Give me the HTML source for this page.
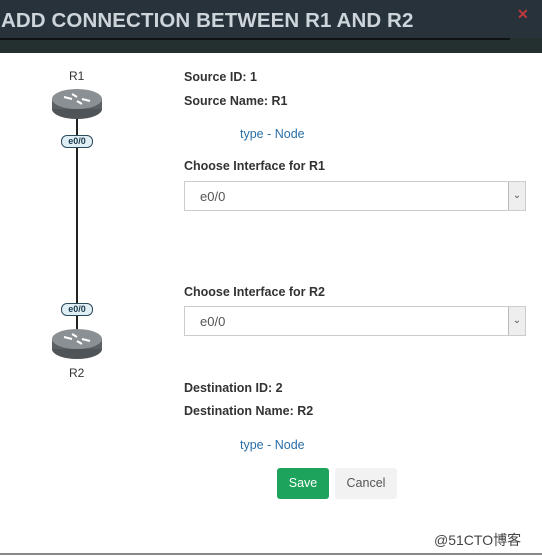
<!DOCTYPE html>
<html><head><style>
body{margin:0;width:542px;height:556px;background:#fff;font-family:"Liberation Sans","Noto Sans CJK SC",sans-serif;position:relative;overflow:hidden}
.hdr{position:absolute;left:0;top:0;width:542px;height:38px;background:#27323a}
.hdr2{position:absolute;left:0;top:38px;width:542px;height:15px;background:#243030}
.hline{position:absolute;left:0;top:38px;width:510px;height:2px;background:#0e1214}
.title{position:absolute;left:1px;top:9px;color:#cdd5da;font-weight:bold;font-size:20.5px;letter-spacing:0.1px}
.x{position:absolute;left:517px;top:6px;color:#c0383c;font-weight:bold;font-size:14px}
.t{position:absolute;font-size:12.5px;color:#333;font-weight:bold}
.lk{position:absolute;font-size:12.5px;color:#2a6fa8}
.sel{position:absolute;left:184px;width:342px;height:30px;border:1px solid #ccc;box-sizing:border-box;font-size:13px;color:#555}
.sel span{position:absolute;left:15px;top:7px}
.arr{position:absolute;right:0;top:0;width:16px;height:28px;background:#eee;border-left:1px solid #bbb;font-size:10px;text-align:center;line-height:28px;color:#555}
.lbl{position:absolute;font-size:12px;color:#333}
.pill{position:absolute;width:30px;height:11px;border:1.5px solid #2a4a5a;border-radius:6px;background:#dfeff5;font-size:9px;font-weight:bold;color:#1a3a4a;text-align:center;line-height:11px}
</style></head><body>
<div class="hdr"></div><div class="hdr2"></div><div class="hline"></div>
<div class="title">ADD CONNECTION BETWEEN R1 AND R2</div>
<div class="x">✕</div>

<div style="position:absolute;left:76px;top:118px;width:2px;height:212px;background:#222"></div>
<div class="lbl" style="left:69px;top:69px">R1</div>
<div class="lbl" style="left:69px;top:366px">R2</div>
<svg style="position:absolute;left:50px;top:86px" width="56" height="36"><ellipse cx="27" cy="23" rx="25" ry="10" fill="#4e5458"/><rect x="2" y="13" width="50" height="10" fill="#5a6064"/><ellipse cx="27" cy="13" rx="25" ry="10" fill="#8a9094"/><path d="M14 11l8 2M40 15l-8-2M22 8l5 3M32 18l-5-3" stroke="#fff" stroke-width="2"/></svg>
<svg style="position:absolute;left:50px;top:326px" width="56" height="36"><ellipse cx="27" cy="23" rx="25" ry="10" fill="#4e5458"/><rect x="2" y="13" width="50" height="10" fill="#5a6064"/><ellipse cx="27" cy="13" rx="25" ry="10" fill="#8a9094"/><path d="M14 11l8 2M40 15l-8-2M22 8l5 3M32 18l-5-3" stroke="#fff" stroke-width="2"/></svg>
<div class="pill" style="left:61px;top:135px">e0/0</div>
<div class="pill" style="left:61px;top:303px">e0/0</div>

<div class="t" style="left:184px;top:70px">Source ID: 1</div>
<div class="t" style="left:184px;top:94px">Source Name: R1</div>
<div class="lk" style="left:240px;top:127px">type - Node</div>
<div class="t" style="left:184px;top:159px">Choose Interface for R1</div>
<div class="sel" style="top:181px"><span>e0/0</span><div class="arr">⌄</div></div>
<div class="t" style="left:184px;top:285px">Choose Interface for R2</div>
<div class="sel" style="top:306px"><span>e0/0</span><div class="arr">⌄</div></div>
<div class="t" style="left:184px;top:381px">Destination ID: 2</div>
<div class="t" style="left:184px;top:404px">Destination Name: R2</div>
<div class="lk" style="left:240px;top:438px">type - Node</div>
<div style="position:absolute;left:277px;top:468px;width:52px;height:31px;background:#1ea35c;border-radius:3px;color:#fff;font-size:12.5px;text-align:center;line-height:31px">Save</div>
<div style="position:absolute;left:335px;top:468px;width:62px;height:31px;background:#f2f2f2;border-radius:3px;color:#555;font-size:12.5px;text-align:center;line-height:31px">Cancel</div>
<div style="position:absolute;left:434px;top:530px;font-size:14px;color:#444">@51CTO博客</div>
<div style="position:absolute;left:0;top:553px;width:542px;height:2px;background:#888"></div>
</body></html>
